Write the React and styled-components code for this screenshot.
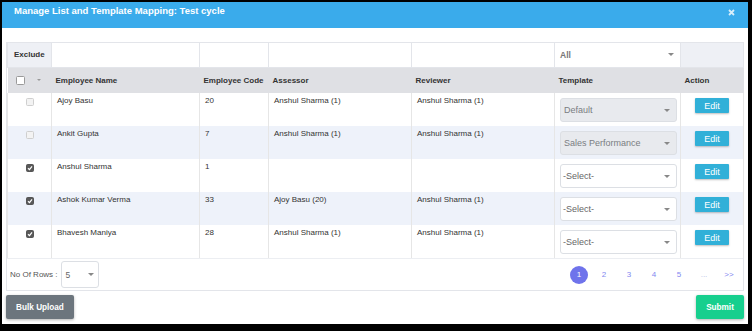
import React from 'react'
import styled, { createGlobalStyle } from 'styled-components'

const GlobalStyle = createGlobalStyle`
  * { box-sizing: border-box; }
  html, body { margin: 0; padding: 0; background: #000; }
  body { font-family: "Liberation Sans", Arial, sans-serif; color: #333; }
`

const Modal = styled.div`
  margin: 2px;
  width: 746px;
  height: 322px;
  background: #fff;
  display: flex;
  flex-direction: column;
`

const Header = styled.div`
  height: 26px;
  background: #3aabeb;
  display: flex;
  justify-content: space-between;
  align-items: flex-start;
  padding: 4px 13px 0 12px;
  h1 {
    margin: 0;
    font-size: 9.5px;
    line-height: 10px;
    font-weight: 700;
    color: #fff;
  }
  svg {
    margin-top: 3px;
  }
`

const Body = styled.div`
  padding: 14px 4px 0 4px;
  display: flex;
  flex-direction: column;
`

const Panel = styled.div`
  border: 1px solid #e3e5ea;
  display: flex;
  flex-direction: column;
`

const Table = styled.table`
  width: 100%;
  border-collapse: collapse;
  table-layout: fixed;
  font-size: 8px;
`

const FilterCell = styled.td`
  height: 24px;
  padding: 0 6px;
  border: 1px solid #e3e5ea;
  border-top: none;
  background: ${p => (p.$shade ? '#eef0f5' : '#fff')};
  font-weight: 700;
  color: #333;
  vertical-align: middle;
`

const HeadCell = styled.th`
  height: 26px;
  padding: 0 4px;
  background: #dfe0e4;
  text-align: left;
  font-weight: 700;
  color: #333;
  vertical-align: middle;
  white-space: nowrap;
`

const HeadCheck = styled.div`
  display: flex;
  align-items: center;
  gap: 12px;
  padding-left: 4px;
`

const SortCaret = styled.span`
  width: 0;
  height: 0;
  border-left: 2px solid transparent;
  border-right: 2px solid transparent;
  border-top: 2px solid #999;
`

const Row = styled.tr`
  background: ${p => (p.$alt ? '#eef2fa' : '#fff')};
`

const Cell = styled.td`
  height: 33px;
  padding: ${p => (p.$ctl ? '5px 5px 0' : '3px 5px 0')};
  border-left: 1px solid #e6e6e6;
  border-right: 1px solid #e6e6e6;
  vertical-align: top;
  line-height: 10px;
  color: #333;
  text-align: ${p => (p.$center ? 'center' : 'left')};
  white-space: nowrap;
`

const Box = styled.span`
  display: inline-flex;
  align-items: center;
  justify-content: center;
  width: ${p => (p.$big ? 9 : 8)}px;
  height: ${p => (p.$big ? 9 : 8)}px;
  border-radius: 1.5px;
  border: 1px solid ${p => (p.$checked ? '#555' : p.$big ? '#9a9a9a' : '#cfcfcf')};
  background: ${p => (p.$checked ? '#595959' : p.$big ? '#fff' : '#f3f3f3')};
  vertical-align: top;
`

const Select = styled.div`
  display: flex;
  align-items: center;
  justify-content: space-between;
  width: ${p => p.$w || '117px'};
  height: ${p => p.$h || '24px'};
  padding: 0 6px 0 ${p => p.$pl || '2px'};
  border: ${p => (p.$flat ? 'none' : '1px solid #dcdfe4')};
  border-radius: ${p => (p.$flat ? 0 : '3px')};
  background: ${p => (p.$disabled ? '#e8eaee' : '#fff')};
  color: ${p => (p.$disabled ? '#7a7d82' : '#666')};
  font-size: ${p => p.$fs || '9px'};
`

const Caret = styled.span`
  width: 0;
  height: 0;
  border-left: 3px solid transparent;
  border-right: 3px solid transparent;
  border-top: 3px solid #888;
`

const EditButton = styled.button`
  width: 34px;
  height: 15px;
  padding: 0;
  border: none;
  border-radius: 1px;
  background: #31b0d8;
  box-shadow: 0 1px 2px rgba(0, 0, 0, 0.25);
  color: #fff;
  font-family: inherit;
  font-size: 9px;
  line-height: 14px;
`

const PagerRow = styled.div`
  height: 32px;
  border-top: 1px solid #eceef2;
  display: flex;
  align-items: center;
  justify-content: space-between;
  padding: 0 5px 0 3px;
  font-size: 8px;
  color: #555;
`

const RowsPick = styled.div`
  display: flex;
  align-items: center;
  gap: 3px;
`

const Pages = styled.div`
  display: flex;
  align-items: center;
  gap: 7px;
`

const PageItem = styled.span`
  width: 18px;
  height: 18px;
  border-radius: 50%;
  display: flex;
  align-items: center;
  justify-content: center;
  font-size: 8px;
  background: ${p => (p.$active ? '#6f73eb' : 'transparent')};
  color: ${p => (p.$active ? '#fff' : p.$muted ? '#b8bbe6' : '#8387f0')};
`

const Footer = styled.div`
  display: flex;
  justify-content: space-between;
  padding-top: 4px;
`

const Button = styled.button`
  height: 24px;
  padding: 0;
  width: ${p => p.$w};
  border: none;
  border-radius: 2px;
  background: ${p => p.$bg};
  box-shadow: 0 1px 3px rgba(0, 0, 0, 0.3);
  color: #fff;
  font-family: inherit;
  font-size: 8.2px;
  font-weight: 700;
`

const Check = () => (
  <svg width="6" height="6" viewBox="0 0 6 6">
    <path d="M1 3.2 L2.5 4.6 L5 1.4" fill="none" stroke="#fff" strokeWidth="1.2" />
  </svg>
)

const rows = [
  { name: 'Ajoy Basu', code: '20', assessor: 'Anshul Sharma (1)', reviewer: 'Anshul Sharma (1)', template: 'Default', disabled: true, checked: false },
  { name: 'Ankit Gupta', code: '7', assessor: 'Anshul Sharma (1)', reviewer: 'Anshul Sharma (1)', template: 'Sales Performance', disabled: true, checked: false },
  { name: 'Anshul Sharma', code: '1', assessor: '', reviewer: '', template: '-Select-', checked: true },
  { name: 'Ashok Kumar Verma', code: '33', assessor: 'Ajoy Basu (20)', reviewer: 'Anshul Sharma (1)', template: '-Select-', checked: true },
  { name: 'Bhavesh Maniya', code: '28', assessor: 'Anshul Sharma (1)', reviewer: 'Anshul Sharma (1)', template: '-Select-', checked: true },
]

export default function App() {
  return (
    <>
      <GlobalStyle />
      <Modal>
        <Header>
          <h1>Manage List and Template Mapping: Test cycle</h1>
          <svg width="7" height="7" viewBox="0 0 7 7">
            <path d="M1 1 L6 6 M6 1 L1 6" stroke="rgba(255,255,255,0.8)" strokeWidth="1.8" />
          </svg>
        </Header>
        <Body>
          <Panel>
            <Table>
              <colgroup>
                <col style={{ width: 44 }} />
                <col style={{ width: 148 }} />
                <col style={{ width: 69 }} />
                <col style={{ width: 143 }} />
                <col style={{ width: 143 }} />
                <col style={{ width: 126 }} />
                <col style={{ width: 63 }} />
              </colgroup>
              <thead>
                <tr>
                  <FilterCell $shade>Exclude</FilterCell>
                  <FilterCell />
                  <FilterCell />
                  <FilterCell />
                  <FilterCell />
                  <FilterCell style={{ padding: 0 }}>
                    <Select $flat $w="100%" $h="22px" $pl="5px" $fs="8.5px" style={{ color: '#777' }}>
                      All <Caret />
                    </Select>
                  </FilterCell>
                  <FilterCell $shade />
                </tr>
                <tr>
                  <HeadCell>
                    <HeadCheck>
                      <Box $big />
                      <SortCaret />
                    </HeadCheck>
                  </HeadCell>
                  <HeadCell>Employee Name</HeadCell>
                  <HeadCell>Employee Code</HeadCell>
                  <HeadCell>Assessor</HeadCell>
                  <HeadCell>Reviewer</HeadCell>
                  <HeadCell>Template</HeadCell>
                  <HeadCell>Action</HeadCell>
                </tr>
              </thead>
              <tbody>
                {rows.map((r, i) => (
                  <Row key={r.name} $alt={i % 2 === 1}>
                    <Cell $ctl $center>
                      <Box $checked={r.checked}>{r.checked && <Check />}</Box>
                    </Cell>
                    <Cell>{r.name}</Cell>
                    <Cell>{r.code}</Cell>
                    <Cell>{r.assessor}</Cell>
                    <Cell>{r.reviewer}</Cell>
                    <Cell $ctl>
                      <Select $disabled={r.disabled} $pl={r.disabled ? '3px' : '2px'}>
                        {r.template} <Caret />
                      </Select>
                    </Cell>
                    <Cell $ctl $center>
                      <EditButton>Edit</EditButton>
                    </Cell>
                  </Row>
                ))}
              </tbody>
            </Table>
            <PagerRow>
              <RowsPick>
                No Of Rows :
                <Select $w="38px" $h="27px" $pl="4px" $fs="8.5px" style={{ paddingRight: 4 }}>
                  5 <Caret />
                </Select>
              </RowsPick>
              <Pages>
                <PageItem $active>1</PageItem>
                <PageItem>2</PageItem>
                <PageItem>3</PageItem>
                <PageItem>4</PageItem>
                <PageItem>5</PageItem>
                <PageItem $muted>...</PageItem>
                <PageItem>&gt;&gt;</PageItem>
              </Pages>
            </PagerRow>
          </Panel>
          <Footer>
            <Button $w="68px" $bg="#6c757d">Bulk Upload</Button>
            <Button $w="48px" $bg="#17cf8e">Submit</Button>
          </Footer>
        </Body>
      </Modal>
    </>
  )
}
